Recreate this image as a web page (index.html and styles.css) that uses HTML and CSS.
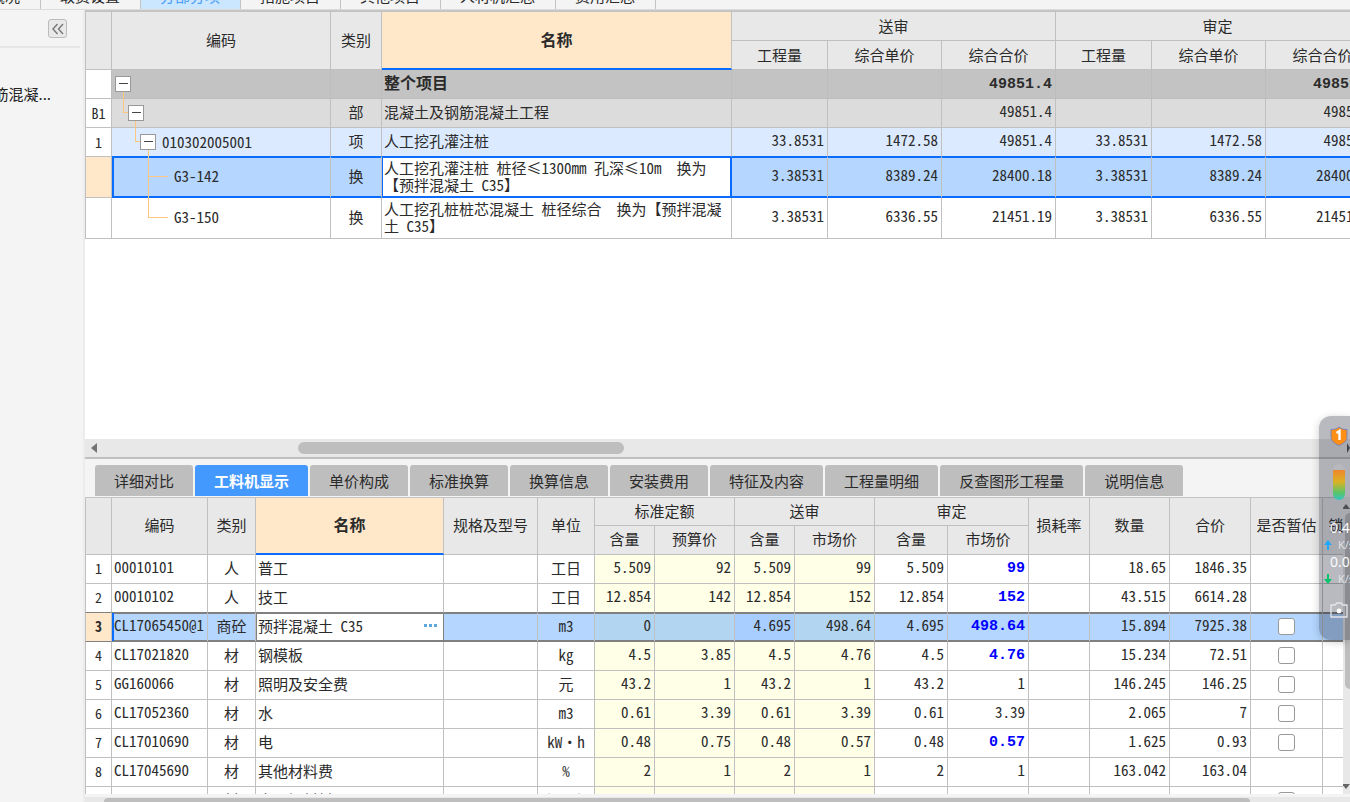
FILE: index.html
```html
<!DOCTYPE html>
<html lang="zh-CN">
<head>
<meta charset="utf-8">
<title>工程审核</title>
<link rel="stylesheet" href="styles.css">
</head>
<body>
<nav class="modules">
  <button class="module short">工程概况</button>
  <button class="module">取费设置</button>
  <button class="module current">分部分项</button>
  <button class="module">措施项目</button>
  <button class="module">其他项目</button>
  <button class="module">人材机汇总</button>
  <button class="module">费用汇总</button>
</nav>
<div class="workspace">
  <aside class="sidebar">
    <div class="sidebar-head">
      <button class="collapse" aria-label="收起">
        <svg width="14" height="12" viewBox="0 0 14 12" fill="none" stroke="#777" stroke-width="1.4"><path d="M6.500 1 2 6l4.500 5M12 1 7.500 6 12 11"/></svg>
      </button>
    </div>
    <div class="sidebar-item"><span>钢筋混凝...</span></div>
  </aside>
  <main class="main">
    <section class="pane upper">
      <div class="grid-view">
        <table class="grid bills">
          <colgroup><col class="w27"><col class="w219"><col class="w51"><col class="w350"><col class="w96"><col class="w114"><col class="w114"><col class="w96"><col class="w114"><col class="w114"></colgroup>
          <thead>
            <tr><th rowspan="2"></th><th rowspan="2">编码</th><th rowspan="2">类别</th><th rowspan="2" class="active">名称</th><th colspan="3">送审</th><th colspan="3">审定</th></tr>
            <tr><th>工程量</th><th>综合单价</th><th>综合合价</th><th>工程量</th><th>综合单价</th><th>综合合价</th></tr>
          </thead>
          <tbody>
            <tr class="total"><td class="no"></td><td class="tree l1"><button class="toggle" aria-label="折叠"></button></td><td></td><td>整个项目</td><td></td><td></td><td class="n">49851.4</td><td></td><td></td><td class="n">49851.4</td></tr>
            <tr class="part"><td class="no">B1</td><td class="tree l2"><i class="elbow"></i><button class="toggle" aria-label="折叠"></button></td><td class="c">部</td><td>混凝土及钢筋混凝土工程</td><td></td><td></td><td class="n">49851.4</td><td></td><td></td><td class="n">49851.4</td></tr>
            <tr class="item"><td class="no">1</td><td class="tree l3"><i class="elbow"></i><button class="toggle" aria-label="折叠"></button><span>010302005001</span></td><td class="c">项</td><td>人工挖孔灌注桩</td><td class="n">33.8531</td><td class="n">1472.58</td><td class="n">49851.4</td><td class="n">33.8531</td><td class="n">1472.58</td><td class="n">49851.4</td></tr>
            <tr class="tall selected"><td class="no"></td><td class="tree l4"><i class="elbow"></i><span>G3-142</span></td><td class="c">换</td><td class="editing">人工挖孔灌注桩 桩径≤1300mm 孔深≤10m&nbsp; 换为【预拌混凝土 C35】</td><td class="n">3.38531</td><td class="n">8389.24</td><td class="n">28400.18</td><td class="n">3.38531</td><td class="n">8389.24</td><td class="n">28400.18</td></tr>
            <tr class="tall"><td class="no"></td><td class="tree l4 last"><i class="elbow"></i><span>G3-150</span></td><td class="c">换</td><td>人工挖孔桩桩芯混凝土 桩径综合&nbsp; 换为【预拌混凝土 C35】</td><td class="n">3.38531</td><td class="n">6336.55</td><td class="n">21451.19</td><td class="n">3.38531</td><td class="n">6336.55</td><td class="n">21451.19</td></tr>
          </tbody>
        </table>
      </div>
      <div class="hscroll"><i class="arrow-left"></i><i class="thumb"></i><i class="arrow-right"></i></div>
    </section>
    <section class="pane lower">
      <nav class="tabs">
        <button class="tab">详细对比</button><button class="tab on">工料机显示</button><button class="tab">单价构成</button><button class="tab">标准换算</button><button class="tab">换算信息</button><button class="tab">安装费用</button><button class="tab">特征及内容</button><button class="tab">工程量明细</button><button class="tab">反查图形工程量</button><button class="tab">说明信息</button>
      </nav>
      <div class="lower-body">
        <div class="grid-view">
          <table class="grid resources">
            <colgroup><col class="w27"><col class="w96"><col class="w48"><col class="w188"><col class="w94"><col class="w57"><col class="w60"><col class="w80"><col class="w60"><col class="w80"><col class="w73"><col class="w81"><col class="w61"><col class="w80"><col class="w81"><col class="w72"><col class="w72"></colgroup>
            <thead>
              <tr><th rowspan="2"></th><th rowspan="2">编码</th><th rowspan="2">类别</th><th rowspan="2" class="active">名称</th><th rowspan="2">规格及型号</th><th rowspan="2">单位</th><th colspan="2">标准定额</th><th colspan="2">送审</th><th colspan="2">审定</th><th rowspan="2">损耗率</th><th rowspan="2">数量</th><th rowspan="2">合价</th><th rowspan="2">是否暂估</th><th rowspan="2">锁定数量</th></tr>
              <tr><th>含量</th><th>预算价</th><th>含量</th><th>市场价</th><th>含量</th><th>市场价</th></tr>
            </thead>
            <tbody>
              <tr><td class="no">1</td><td class="code">00010101</td><td class="c">人</td><td>普工</td><td></td><td class="c">工日</td><td class="n y">5.509</td><td class="n y">92</td><td class="n y">5.509</td><td class="n y">99</td><td class="n">5.509</td><td class="n diff">99</td><td></td><td class="n">18.65</td><td class="n">1846.35</td><td></td><td></td></tr>
              <tr class="before"><td class="no">2</td><td class="code">00010102</td><td class="c">人</td><td>技工</td><td></td><td class="c">工日</td><td class="n y">12.854</td><td class="n y">142</td><td class="n y">12.854</td><td class="n y">152</td><td class="n">12.854</td><td class="n diff">152</td><td></td><td class="n">43.515</td><td class="n">6614.28</td><td></td><td></td></tr>
              <tr class="picked"><td class="no">3</td><td class="code first">CL17065450@1</td><td class="c">商砼</td><td class="editing"><div class="edit"><span>预拌混凝土 C35</span><button class="more" aria-label="更多"><i></i><i></i><i></i></button></div></td><td></td><td class="c">m3</td><td class="n y">0</td><td class="n y"></td><td class="n y changed">4.695</td><td class="n y">498.64</td><td class="n">4.695</td><td class="n diff">498.64</td><td></td><td class="n">15.894</td><td class="n">7925.38</td><td class="check"><input type="checkbox" aria-label="是否暂估"></td><td></td></tr>
              <tr><td class="no">4</td><td class="code">CL17021820</td><td class="c">材</td><td>钢模板</td><td></td><td class="c">kg</td><td class="n y">4.5</td><td class="n y">3.85</td><td class="n y">4.5</td><td class="n y">4.76</td><td class="n">4.5</td><td class="n diff">4.76</td><td></td><td class="n">15.234</td><td class="n">72.51</td><td class="check"><input type="checkbox" aria-label="是否暂估"></td><td></td></tr>
              <tr><td class="no">5</td><td class="code">GG160066</td><td class="c">材</td><td>照明及安全费</td><td></td><td class="c">元</td><td class="n y">43.2</td><td class="n y">1</td><td class="n y">43.2</td><td class="n y">1</td><td class="n">43.2</td><td class="n">1</td><td></td><td class="n">146.245</td><td class="n">146.25</td><td class="check"><input type="checkbox" aria-label="是否暂估"></td><td></td></tr>
              <tr><td class="no">6</td><td class="code">CL17052360</td><td class="c">材</td><td>水</td><td></td><td class="c">m3</td><td class="n y">0.61</td><td class="n y">3.39</td><td class="n y">0.61</td><td class="n y">3.39</td><td class="n">0.61</td><td class="n">3.39</td><td></td><td class="n">2.065</td><td class="n">7</td><td class="check"><input type="checkbox" aria-label="是否暂估"></td><td></td></tr>
              <tr><td class="no">7</td><td class="code">CL17010690</td><td class="c">材</td><td>电</td><td></td><td class="c">kW·h</td><td class="n y">0.48</td><td class="n y">0.75</td><td class="n y">0.48</td><td class="n y">0.57</td><td class="n">0.48</td><td class="n diff">0.57</td><td></td><td class="n">1.625</td><td class="n">0.93</td><td class="check"><input type="checkbox" aria-label="是否暂估"></td><td></td></tr>
              <tr><td class="no">8</td><td class="code">CL17045690</td><td class="c">材</td><td>其他材料费</td><td></td><td class="c">%</td><td class="n y">2</td><td class="n y">1</td><td class="n y">2</td><td class="n y">1</td><td class="n">2</td><td class="n">1</td><td></td><td class="n">163.042</td><td class="n">163.04</td><td></td><td></td></tr>
              <tr class="next"><td class="no"></td><td></td><td class="c">材</td><td>水平钢材料</td><td></td><td class="c">kW·h</td><td class="y"></td><td class="y"></td><td class="y"></td><td class="y"></td><td></td><td></td><td></td><td></td><td></td><td class="check"><input type="checkbox" aria-label="是否暂估"></td><td></td></tr>
            </tbody>
          </table>
        </div>
        <div class="vscroll"><i class="arrow-up"></i><i class="vthumb"></i><i class="arrow-down"></i></div>
      </div>
      <div class="hscroll thin"><i class="thumb"></i></div>
    </section>
  </main>
</div>
<div class="monitor">
  <svg width="18" height="20" viewBox="0 0 18 20"><path d="M9 1C11 3 14 3.500 17 3.500V11c0 4-3.500 6.500-8 8.500C4.500 17.500 1 15 1 11V3.500C4 3.500 7 3 9 1Z" fill="#ff8e14" stroke="#7b83b8"/><path d="M6.500 7 9.500 5v9" fill="none" stroke="#fff" stroke-width="2.400"/></svg>
  <div class="gauge"></div>
  <div class="rate">0.4</div>
  <div class="unit"><svg width="8" height="10" viewBox="0 0 8 10"><path d="M4 0 8 5H5v5H3V5H0Z" fill="#1ea8ff"/></svg>K/s</div>
  <div class="rate">0.0</div>
  <div class="unit"><svg width="8" height="10" viewBox="0 0 8 10"><path d="M4 10 0 5h3V0h2v5h3Z" fill="#05c46b"/></svg>K/s</div>
  <svg class="camera" width="18" height="16" viewBox="0 0 18 16"><path d="M1 3h4l2-2h4l2 2h4v12H1Z" fill="none" stroke="#e4e6ea" stroke-width="1.300"/><circle cx="9" cy="9" r="2.400" fill="#fff"/></svg>
</div>
</body>
</html>
```
FILE: styles.css
```css
* { box-sizing: border-box; }
body {
  margin: 0;
  height: 100vh;
  display: flex;
  flex-direction: column;
  overflow: hidden;
  background: #f4f4f4;
  color: #2b2b2b;
  font: 15px/17px "Noto Sans Mono CJK SC", "Liberation Mono", "Noto Sans CJK SC", monospace;
}
button { font: inherit; color: inherit; padding: 0; border: 0; background: none; }

/* module strip, scrolled so that only its lower edge shows */
.modules {
  flex: none;
  height: 10px;
  display: flex;
  align-items: flex-end;
  overflow: hidden;
  border-bottom: 1px solid #dcdcdc;
  font-family: "Noto Sans CJK SC", sans-serif;
}
.module { height: 28px; padding: 0 20px 0 19px; border-right: 1px solid #c4c4c4; white-space: nowrap; line-height: 17px; }
.module.short { width: 41px; direction: rtl; padding-left: 0; }
.module.current { background: #cbe6ff; color: #4a9cf5; }

.workspace { flex: 1; min-height: 0; display: flex; }
.sidebar { flex: none; width: 85px; border-right: 2px solid #ececec; font-family: "Noto Sans CJK SC", sans-serif; color: #222; }
.sidebar-head { height: 38px; margin-right: 3px; padding: 9px 13px; display: flex; justify-content: flex-end; border-bottom: 2px solid #e6e6e6; }
.collapse { width: 19px; height: 19px; display: grid; place-items: center; border: 1px solid #bbb; border-radius: 3px; background: #e9e9e9; }
.sidebar-item { width: 51px; margin-top: 37px; display: flex; justify-content: flex-end; overflow: hidden; white-space: nowrap; }

.main { flex: 1; min-width: 0; display: flex; flex-direction: column; }
.pane { min-height: 0; display: flex; flex-direction: column; }
.upper { flex: 448 1 0; background: #fff; border-bottom: 2px solid #c0c0c0; }
.lower { flex: 344 1 0; }
.grid-view { flex: 1; min-height: 0; min-width: 0; overflow: hidden; background: #fff; }

.grid { table-layout: fixed; width: 0; border-collapse: separate; border-spacing: 0; border-top: 2px solid #c4c4c4; }
.resources { border-top-width: 1px; }
.grid th, .grid td { height: 29px; padding: 0 2px 3px; border-right: 1px solid #c0c0c0; border-bottom: 1px solid #c0c0c0; overflow: hidden; }
.grid th { background: #e8e8e8; font-weight: 400; white-space: nowrap; overflow: visible; padding-bottom: 2px; }
.grid tr > :first-child[rowspan], .grid .no { border-left: 1px solid #c0c0c0; }
.grid th.active { background: #ffe7ca; border-bottom: 2px solid #0a6bff; font-size: 16px; font-weight: 700; }
.grid .no { padding: 0; background: #fff; text-align: center; font-size: 14px; }
.c { text-align: center; }
.grid .n { text-align: right; padding: 0 3px 5px 0; }
.grid .code { padding-bottom: 4px; }
.grid .check { padding-bottom: 0; }
.resources thead tr:first-child th { height: 28px; }
.resources .n { padding-bottom: 4px; }
.w27 { width: 27px; } .w48 { width: 48px; } .w51 { width: 51px; } .w57 { width: 57px; }
.w60 { width: 60px; } .w61 { width: 61px; } .w72 { width: 72px; } .w73 { width: 73px; }
.w80 { width: 80px; } .w81 { width: 81px; } .w94 { width: 94px; } .w96 { width: 96px; }
.w114 { width: 114px; } .w188 { width: 188px; } .w219 { width: 219px; } .w350 { width: 350px; }

.total td { background: #c3c3c3; border-color: #bdbdbd; font-size: 16px; font-weight: 700; }
.grid .total .n, .grid .diff { padding-bottom: 0; font-family: "Liberation Mono", monospace; font-size: 15px; font-weight: 700; }
.part td { background: #dcdcdc; }
.item td { background: #dceaff; border-bottom-color: #0a6bff; }
.grid .tall td { height: 41px; }
.selected td { background: #b4d6ff; border-bottom-color: #0a6bff; box-shadow: inset 0 1px #0a6bff, inset 0 -1px #0a6bff; }
.selected .no { background: #ffe7ca; box-shadow: none; }
.item .no, .selected .no { border-bottom-color: #c0c0c0; }
.selected .tree { box-shadow: inset 2px 1px #0a6bff, inset 0 -1px #0a6bff; }
.selected .editing { background: #fff; border-right-color: #0a6bff; box-shadow: inset 1px 1px #0a6bff, inset -1px -1px #0a6bff; }

.grid .tree { position: relative; overflow: visible; white-space: nowrap; padding-bottom: 3px; }
.grid .l4 { padding-bottom: 5px; }
.tree > span { vertical-align: middle; }
.toggle { position: relative; z-index: 2; width: 16px; height: 16px; vertical-align: middle; border: 1px solid #999; background: linear-gradient(#444, #444) center / 9px 1px no-repeat #fff; }
.grid .l1 { padding-left: 3px; }
.grid .l2 { padding-left: 16px; }
.grid .l3 { padding-left: 28px; }
.grid .l4 { padding-left: 62px; }
.l3 span { padding-left: 6px; }
.elbow { position: absolute; z-index: 1; top: -7px; bottom: 50%; left: 11px; width: 5px; border-left: 1px solid #ffc680; border-bottom: 1px solid #ffc680; }
.l3 .elbow { left: 23px; }
.l4 .elbow { left: 36px; width: 20px; }
.last .elbow { top: -21px; }

.hscroll { flex: none; height: 18px; display: flex; align-items: center; background: #e8e8e8; padding-left: 6px; }
.arrow-left { border: 5px solid transparent; border-right: 6px solid #737373; border-left: 0; }
.arrow-right { margin-left: auto; border: 5px solid transparent; border-left: 3px solid #555; border-right: 0; }
.hscroll .thumb { width: 326px; height: 12px; margin-left: 16%; border-radius: 6px; background: #bebebe; }
.hscroll.thin { height: 5px; margin-top: 3px; padding-left: 19px; align-items: flex-end; }
.hscroll.thin .thumb { width: 92%; height: 4px; margin: 0; border-radius: 4px 4px 0 0; }

.tabs { flex: none; height: 38px; padding: 6px 10px 0; display: flex; gap: 2px; font-family: "Noto Sans CJK SC", sans-serif; }
.tab { height: 31px; padding: 0 19px; white-space: nowrap; background: #bebebe; border-radius: 3px 3px 0 0; }
.tab.on { background: #4499ff; color: #fff; font-weight: 700; }
.lower-body { flex: 1; min-height: 0; display: flex; }

.grid .y { background: #ffffe8; }
.grid .diff { color: #00f; }
.before td { border-bottom-color: #808080; }
.picked td { background: #b4d6ff; border-bottom-color: #808080; box-shadow: inset 0 1px #808080, inset 0 -1px #808080; }
.grid .picked .y { background: #b2d6f2; }
.grid .picked .changed { background: #a8ceff; }
.picked .no { background: #ffe7ca; font-weight: 700; box-shadow: none; }
.picked .first { box-shadow: inset 2px 0 #0a6bff, inset 0 1px #808080, inset 0 -1px #808080; }
.picked .editing { background: #fff; border-right-color: #808080; box-shadow: inset 1px 1px #808080, inset 0 -1px #808080; }
.edit { display: flex; justify-content: space-between; align-items: center; }
.more { display: flex; gap: 2px; padding-right: 4px; }
.more i { width: 3px; height: 3px; background: #5fa8dc; }
.resources input { appearance: none; display: block; width: 17px; height: 17px; margin: 0 auto; border: 1px solid #999; border-radius: 3px; background: #fff; }

.vscroll { flex: none; width: 7px; display: flex; flex-direction: column; align-items: flex-end; overflow: hidden; background: #e8e8e8; padding: 7px 0 5px 2px; }
.arrow-up { border: 4px solid transparent; border-bottom: 5px solid #666; border-top: 0; }
.vthumb { width: 5px; height: 176px; margin-top: 4px; border-radius: 5px 0 0 5px; background: #bebebe; }
.arrow-down { margin-top: auto; border: 4px solid transparent; border-top: 5px solid #666; border-bottom: 0; }

/* system monitor docked over the right edge of the window */
.monitor {
  position: absolute;
  z-index: 5;
  top: 416px;
  right: 0;
  width: 31px;
  height: 224px;
  padding: 10px 0 0 11px;
  overflow: hidden;
  border-radius: 12px 0 0 12px;
  background: rgba(20, 28, 45, .3);
  box-shadow: 0 2px 8px rgba(0, 0, 0, .2);
  color: #fff;
  font: 14px/20px "Open Sans", sans-serif;
  white-space: nowrap;
}
.monitor svg { display: block; flex: none; }
.gauge { width: 12px; height: 36px; margin: 18px 0 18px 3px; border-radius: 6px; background: linear-gradient(#b6b8bc 16%, #f0852d 16%, #d9b324 50%, #59c56a 80%, #35c3c4); }
.rate { height: 20px; }
.unit { display: flex; align-items: center; gap: 6px; height: 14px; margin-left: -6px; font-size: 11px; color: #e2e4e8; }
.camera { margin-top: 16px; }
```
